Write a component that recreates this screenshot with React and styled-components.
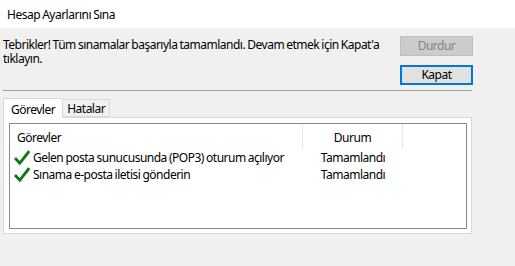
import styled, { createGlobalStyle } from 'styled-components';

const GlobalStyle = createGlobalStyle`
    html, body {
        margin: 0;
        padding: 0;
        background: #f0f0f0;
    }
    body {
        font-family: 'Noto Sans', 'Open Sans', sans-serif;
        font-size: 12px;
        letter-spacing: -0.5px;
        word-spacing: -0.5px;
        color: #000;
    }
`;

const Window = styled.div`
    width: 515px;
    height: 266px;
    display: flex;
    flex-direction: column;
    background: #f0f0f0;
    overflow: hidden;
`;

const TitleBar = styled.div`
    height: 28px;
    flex-shrink: 0;
    background: #fff;
    display: flex;
    align-items: center;
    padding-left: 7px;
    padding-top: 1px;
    box-sizing: border-box;
    font-size: 12px;
`;

const Body = styled.div`
    flex: 1;
    padding: 8px 0 0 3px;
    display: flex;
    flex-direction: column;
`;

const TopRow = styled.div`
    display: flex;
    width: 470px;
`;

const Message = styled.div`
    width: 388px;
    margin-right: 9px;
    line-height: 14px;
    padding-top: 2px;
`;

const Buttons = styled.div`
    display: flex;
    flex-direction: column;
    gap: 9px;
`;

const Button = styled.button`
    width: 73px;
    height: 20px;
    box-sizing: border-box;
    font-family: inherit;
    font-size: 12px;
    letter-spacing: inherit;
    padding: 0;
    line-height: 16px;
    background: ${(p) => (p.disabled ? '#cccccc' : '#e1e1e1')};
    color: ${(p) => (p.disabled ? '#838383' : '#000')};
    border: ${(p) => (p.primary ? '2px solid #0078d7' : '1px solid #bfbfbf')};
`;

const Separator = styled.div`
    width: 469px;
    height: 1px;
    background: #a0a0a0;
    margin-top: 5px;
`;

const TabStrip = styled.div`
    display: flex;
    align-items: flex-end;
    margin-top: 6px;
    height: 20px;
    position: relative;
    z-index: 1;
`;

const Tab = styled.div`
    box-sizing: border-box;
    height: ${(p) => (p.active ? '20px' : '18px')};
    padding: 0 ${(p) => (p.active ? '7px' : '4px')};
    background: ${(p) => (p.active ? '#fff' : '#f0f0f0')};
    border: 1px solid #d9d9d9;
    border-bottom: ${(p) => (p.active ? 'none' : '1px solid #d9d9d9')};
    margin-left: ${(p) => (p.active ? '0' : '-1px')};
    display: flex;
    align-items: ${(p) => (p.active ? 'flex-start' : 'center')};
    padding-top: ${(p) => (p.active ? '2px' : '0')};
    margin-bottom: ${(p) => (p.active ? '-1px' : '0')};
`;

const Panel = styled.div`
    width: 469px;
    height: 117px;
    box-sizing: border-box;
    background: #fff;
    border: 1px solid #d9d9d9;
    padding: 5px 4px 4px 5px;
`;

const List = styled.div`
    height: 100%;
    box-sizing: border-box;
    border: 1px solid #828790;
    background: #fff;
`;

const HeaderRow = styled.div`
    display: grid;
    grid-template-columns: 293px 100px 1fr;
    height: 25px;
`;

const HeaderCell = styled.div`
    display: flex;
    align-items: center;
    justify-content: ${(p) => (p.center ? 'center' : 'flex-start')};
    padding-left: ${(p) => (p.center ? '0' : '7px')};
    padding-top: 2px;
    border-right: ${(p) => (p.last ? 'none' : '1px solid #e5e5e5')};
`;

const Row = styled.div`
    display: grid;
    grid-template-columns: 293px 100px 1fr;
    height: 17px;
    align-items: center;
`;

const TaskCell = styled.div`
    display: flex;
    align-items: center;
    padding-left: 4px;
    gap: 3px;
    white-space: nowrap;

    svg {
        flex-shrink: 0;
    }
`;

const StatusCell = styled.div`
    text-align: center;
`;

function Check() {
    return (
        <svg width="16" height="15" viewBox="0 0 16 15">
            <path d="M1 8 L5.8 13.2 L15.2 1.2" fill="none" stroke="#0b7a14" strokeWidth="2.8" strokeLinejoin="miter" />
        </svg>
    );
}

const tasks = [
    { name: 'Gelen posta sunucusunda (POP3) oturum açılıyor', status: 'Tamamlandı' },
    { name: 'Sınama e-posta iletisi gönderin', status: 'Tamamlandı' },
];

export default function App() {
    return (
        <>
            <GlobalStyle />
            <Window>
                <TitleBar>Hesap Ayarlarını Sına</TitleBar>
                <Body>
                    <TopRow>
                        <Message>
                            Tebrikler! Tüm sınamalar başarıyla tamamlandı. Devam etmek için Kapat'a tıklayın.
                        </Message>
                        <Buttons>
                            <Button disabled>Durdur</Button>
                            <Button primary>Kapat</Button>
                        </Buttons>
                    </TopRow>
                    <Separator />
                    <TabStrip>
                        <Tab active>Görevler</Tab>
                        <Tab>Hatalar</Tab>
                    </TabStrip>
                    <Panel>
                        <List>
                            <HeaderRow>
                                <HeaderCell>Görevler</HeaderCell>
                                <HeaderCell center>Durum</HeaderCell>
                                <HeaderCell last />
                            </HeaderRow>
                            {tasks.map((t) => (
                                <Row key={t.name}>
                                    <TaskCell>
                                        <Check />
                                        {t.name}
                                    </TaskCell>
                                    <StatusCell>{t.status}</StatusCell>
                                </Row>
                            ))}
                        </List>
                    </Panel>
                </Body>
            </Window>
        </>
    );
}
